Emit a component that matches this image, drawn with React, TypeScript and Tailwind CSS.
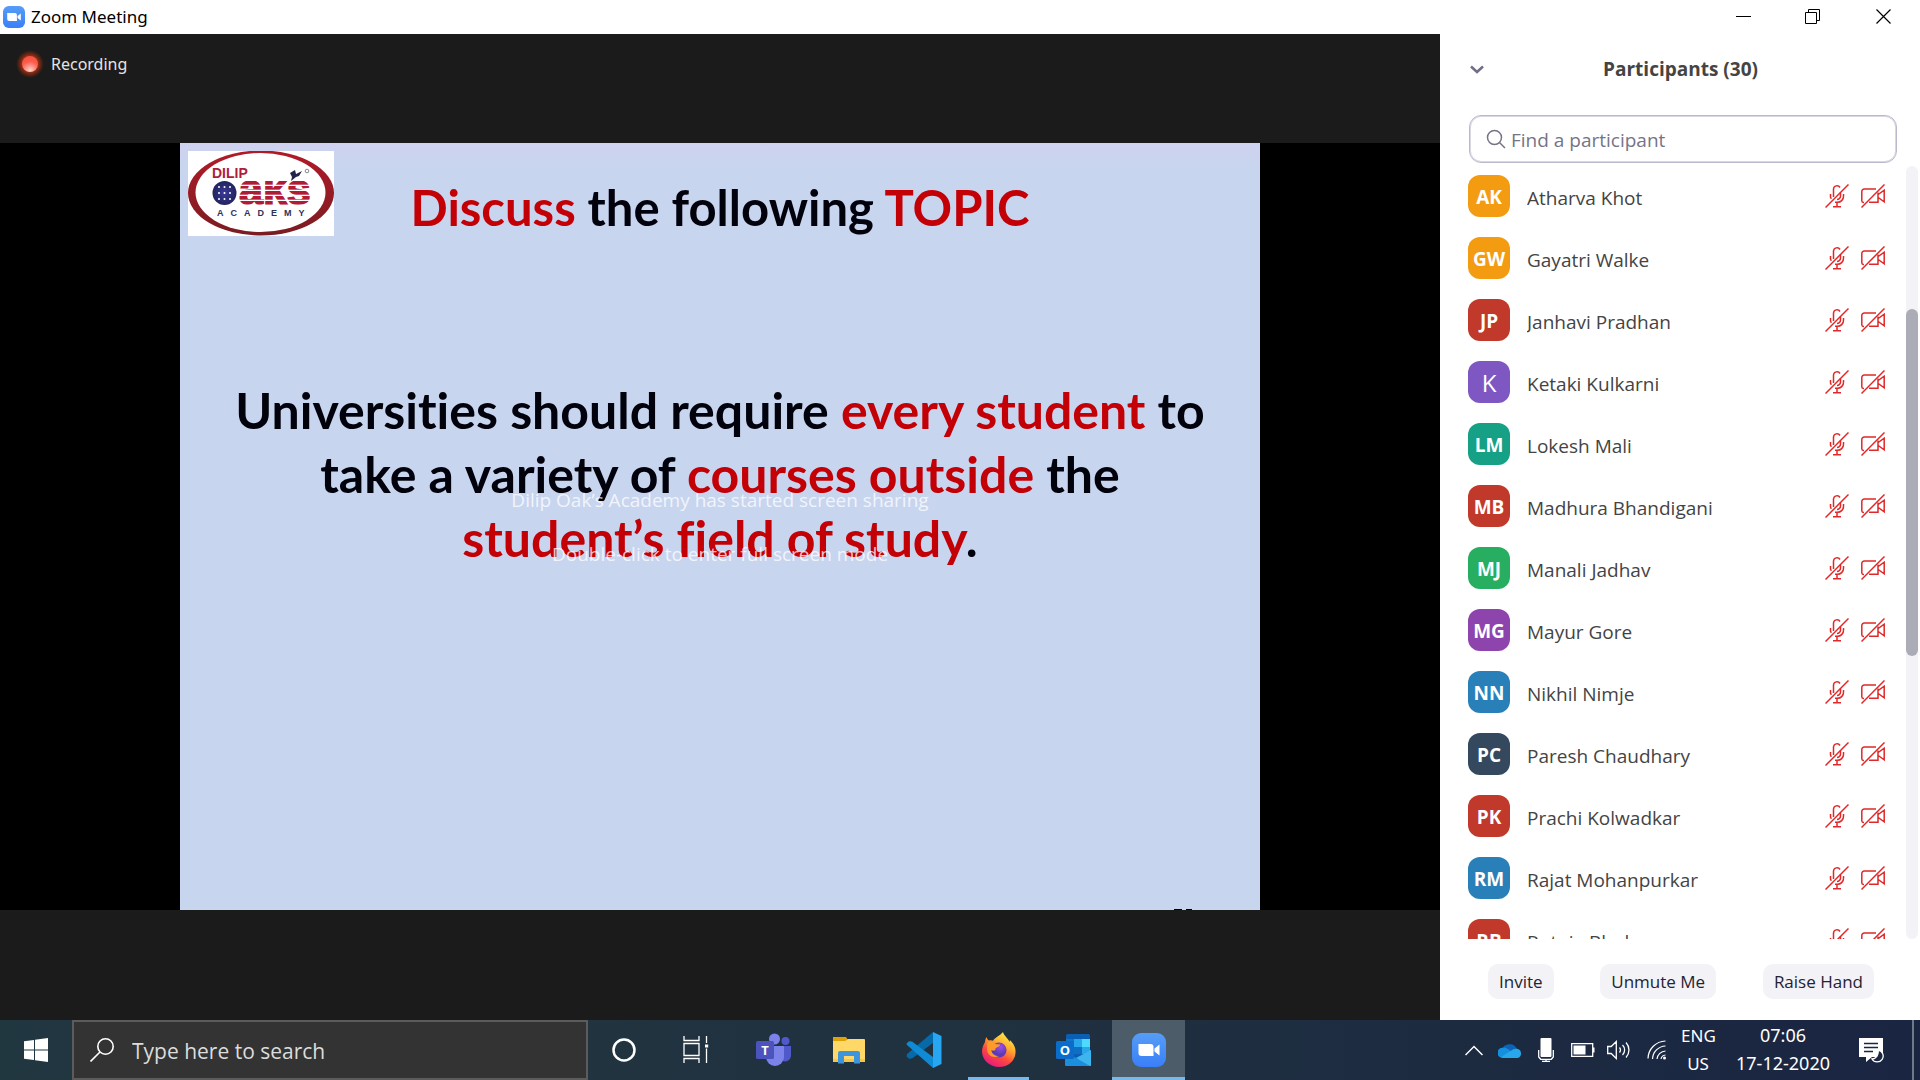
import React from "react";

type Person = { initials: string; name: string; tint: string; solo?: boolean };

const people: Person[] = [
  { initials: "AK", name: "Atharva Khot", tint: "bg-[#f39c12]" },
  { initials: "GW", name: "Gayatri Walke", tint: "bg-[#f39c12]" },
  { initials: "JP", name: "Janhavi Pradhan", tint: "bg-[#c0392b]" },
  { initials: "K", name: "Ketaki Kulkarni", tint: "bg-[#7e57c2]", solo: true },
  { initials: "LM", name: "Lokesh Mali", tint: "bg-[#16a085]" },
  { initials: "MB", name: "Madhura Bhandigani", tint: "bg-[#c0392b]" },
  { initials: "MJ", name: "Manali Jadhav", tint: "bg-[#27ae60]" },
  { initials: "MG", name: "Mayur Gore", tint: "bg-[#8e44ad]" },
  { initials: "NN", name: "Nikhil Nimje", tint: "bg-[#2980b9]" },
  { initials: "PC", name: "Paresh Chaudhary", tint: "bg-[#34495e]" },
  { initials: "PK", name: "Prachi Kolwadkar", tint: "bg-[#c0392b]" },
  { initials: "RM", name: "Rajat Mohanpurkar", tint: "bg-[#2980b9]" },
  { initials: "RB", name: "Rutuja Bhokare", tint: "bg-[#c0392b]" },
];

function ZoomLogo({ className }: { className: string }) {
  return (
    <svg viewBox="0 0 34 34" className={className} aria-hidden="true">
      <defs>
        <linearGradient id="zoomBlue" x1="0" y1="0" x2="0" y2="1">
          <stop offset="0" stopColor="#569df7" />
          <stop offset="1" stopColor="#3a7ff8" />
        </linearGradient>
      </defs>
      <rect width="34" height="34" rx="9" fill="url(#zoomBlue)" />
      <path d="M6.500 11h12a3 3 0 0 1 3 3v9h-12a3 3 0 0 1-3-3z" fill="#fff" />
      <path d="M22.500 15.500l5-4v11l-5-4z" fill="#fff" />
    </svg>
  );
}

function MicOff() {
  return (
    <svg viewBox="0 0 24 24" className="size-6" fill="none" stroke="#e02828" strokeWidth="1.500" aria-hidden="true">
      <path d="M8.500 13V5a3.500 3.500 0 0 1 6.500-1.500M15.500 8.500V12a3.500 3.500 0 0 1-3.500 3.500" />
      <path d="M5.500 10v3l.8 1.800M18.500 10v2a6 6 0 0 1-6.500 6.300h-2M12 18.500V22.500M8 22.800h8" />
      <path d="M.5 23.500L23.500.5" />
    </svg>
  );
}

function CameraOff() {
  return (
    <svg viewBox="0 0 24 24" className="size-6" fill="none" stroke="#e02828" strokeWidth="1.500" aria-hidden="true">
      <path d="M3 18.500H2.500a1.700 1.700 0 0 1-1.700-1.700V7.500A2.500 2.500 0 0 1 3.300 5H15M17 8.500V18.300H8M17.200 10.500l6-4.300v11.600l-6-4.300" />
      <path d="M.5 23.500L23.500.5" />
    </svg>
  );
}

function AcademyLogo() {
  return (
    <svg viewBox="0 0 146 85" className="block w-[146px]" role="img" aria-label="Dilip Oak's Academy">
      <defs>
        <pattern id="stripes" width="8" height="5" patternUnits="userSpaceOnUse">
          <rect width="8" height="5" fill="#b01c35" />
          <rect y="3.700" width="8" height="1.300" fill="#fff" />
        </pattern>
        <linearGradient id="ring" x1="0" y1="0" x2="0" y2="1">
          <stop offset="0" stopColor="#b21a28" />
          <stop offset="1" stopColor="#7a1c22" />
        </linearGradient>
        <radialGradient id="globe">
          <stop offset="0" stopColor="#3a3a9c" />
          <stop offset="1" stopColor="#23235c" />
        </radialGradient>
      </defs>
      <rect width="146" height="85" fill="#fff" />
      <ellipse cx="73" cy="42" rx="73" ry="42.500" fill="url(#ring)" />
      <ellipse cx="72.500" cy="41.500" rx="65" ry="39.500" fill="#fff" />
      <text x="24" y="27" fontFamily="Liberation Sans" fontWeight="700" fontSize="14" fill="#b01c3c">DILIP</text>
      <circle cx="36.500" cy="42" r="12" fill="url(#globe)" />
      <g fill="#fff">
        {[36, 42, 48].map((y) => [31, 36.5, 42].map((x) => <circle key={`${x}-${y}`} cx={x} cy={y} r="1" />))}
      </g>
      <text x="51" y="53" fontFamily="Liberation Sans" fontWeight="700" fontSize="43" fill="url(#stripes)" stroke="url(#stripes)" strokeWidth="1.500">aĸs</text>
      <path d="M102 22l5-3 1 4 6-3-3 5-3 1-5 4 1-4z" fill="#23234a" />
      <circle cx="119" cy="20" r="1.800" fill="none" stroke="#888" />
      <text x="29" y="65" fontFamily="Liberation Sans" fontWeight="700" fontSize="9" letterSpacing="7" fill="#30305a">ACADEMY</text>
    </svg>
  );
}

function TitleBar() {
  return (
    <header className="flex h-[34px] shrink-0 items-center bg-white">
      <ZoomLogo className="ml-[3px] size-[22px]" />
      <h1 className="ml-1.5 flex-1 text-[17px] text-black">Zoom Meeting</h1>
      <button aria-label="Minimize" className="flex h-full w-[69px] items-center justify-center">
        <svg viewBox="0 0 16 16" className="size-4" stroke="#000"><path d="M0 7.500h15" /></svg>
      </button>
      <button aria-label="Restore" className="flex h-full w-[70px] items-center justify-center">
        <svg viewBox="0 0 16 16" className="size-4" fill="none" stroke="#000"><path d="M.5 3.500h11v11H.5zM3.500 3.500v-3h11v11h-3" /></svg>
      </button>
      <button aria-label="Close" className="flex h-full w-[72px] items-center justify-center">
        <svg viewBox="0 0 16 16" className="size-4" stroke="#000" strokeWidth="1.200"><path d="M.5 .5l14 14M14.500 .5l-14 14" /></svg>
      </button>
    </header>
  );
}

function Stage() {
  return (
    <main className="relative flex min-w-0 flex-1 flex-col justify-center bg-[#1b1b1b] pb-px">
      <div className="absolute left-4 top-4 flex items-center gap-[7px] text-base text-[#e4e4e4]">
        <span className="flex size-7 items-center justify-center rounded-full bg-[radial-gradient(circle,#b0351a_35%,#5a2412_55%,transparent_70%)]">
          <span className="size-4 rounded-full bg-[radial-gradient(circle_at_50%_90%,#ffd5cc,#ff5a4a_55%,#f0503c)]" />
        </span>
        Recording
      </div>
      <div className="flex justify-center bg-black">
        <section className="relative aspect-[1080/767] w-3/4 overflow-hidden bg-[#c8d5ef] bg-linear-to-b from-[#cfd2ee] to-[#c8d5ef] to-3% font-['Lato'] font-bold text-[#02020c] [font-variant-ligatures:none]">
          <div className="absolute left-2 top-2"><AcademyLogo /></div>
          <h2 className="mt-8 text-center text-[49px] leading-[64px]">
            <span className="text-[#c40007]">Discuss</span> the following <span className="text-[#c40007]">TOPIC</span>
          </h2>
          <p className="mt-[139px] text-center text-[50px] leading-[64px]">
            Universities should require <span className="text-[#c40007]">every student</span> to<br />
            take a variety of <span className="text-[#c40007]">courses outside</span> the<br />
            <span className="text-[#c40007]">student’s field of study</span>.
          </p>
          <div className="absolute bottom-0 right-[68px] flex gap-1">
            <span className="h-px w-2 bg-black" />
            <span className="h-px w-1.5 bg-black" />
          </div>
        </section>
      </div>
      <div className="absolute inset-x-0 top-[452px] flex flex-col gap-[26px] text-center font-['Open_Sans'] text-[19px] leading-7 text-white/75">
        <p>Dilip Oak’s Academy has started screen sharing</p>
        <p>Double-click to enter full screen mode</p>
      </div>
    </main>
  );
}

function Participants() {
  return (
    <aside className="flex w-[480px] shrink-0 flex-col bg-white font-['Open_Sans']">
      <div className="flex h-[70px] items-center pl-[27px] pr-[60px]">
        <button aria-label="Collapse" className="flex size-5 items-center justify-center">
          <svg viewBox="0 0 14 9" className="w-3.5" fill="none" stroke="#6e6e85" strokeWidth="2.500"><path d="M1 1.500l6 5.500 6-5.500" /></svg>
        </button>
        <h2 className="ml-3.5 flex-1 text-center text-[19px] font-bold text-[#444]">Participants (30)</h2>
      </div>
      <label className="ml-[29px] mr-[23px] mt-[11px] flex h-12 shrink-0 items-center gap-[5px] rounded-xl border border-[#babacc] pl-4 ring-1 ring-inset ring-[#d8d8e2]">
        <svg viewBox="0 0 20 20" className="size-5" fill="none" stroke="#747487" strokeWidth="1.500"><circle cx="8.500" cy="8.500" r="7" /><path d="M13.500 13.500l5.500 5.500" /></svg>
        <input aria-label="Find a participant" placeholder="Find a participant" className="min-w-0 flex-1 bg-transparent pt-0.5 text-[19px] text-[#444] outline-none placeholder:text-[#747487]" />
      </label>
      <div className="flex min-h-0 flex-1 overflow-hidden pt-px">
        <ul className="min-w-0 flex-1 overflow-hidden pt-px">
          {people.map((p) => (
            <li key={p.name} className="flex h-[62px] items-center pl-7 pr-[21px]">
              <span className={`flex size-[42px] shrink-0 items-center justify-center rounded-xl pt-0.5 text-white ${p.tint} ${p.solo ? "text-2xl" : "text-[19px] font-bold"}`}>
                {p.initials}
              </span>
              <span className="ml-[17px] flex-1 truncate pt-1 text-[19px] text-[#444]">{p.name}</span>
              <span className="flex gap-3"><MicOff /><CameraOff /></span>
            </li>
          ))}
        </ul>
        <div className="mr-0.5 mt-0.5 w-3 rounded-full bg-[#f2f2f7] pt-[143px]">
          <div className="h-[55%] rounded-full bg-[#acacb6]" />
        </div>
      </div>
      <div className="flex shrink-0 items-start justify-between pb-[21px] pl-12 pr-[46px] pt-[25px] text-[17px] text-[#232333]">
        {["Invite", "Unmute Me", "Raise Hand"].map((label) => (
          <button key={label} className="h-[35px] rounded-[10px] bg-[#f2f2f7] px-[11px]">{label}</button>
        ))}
      </div>
    </aside>
  );
}

function TeamsIcon() {
  return (
    <svg viewBox="0 0 36 34" className="h-[34px] w-9">
      <circle cx="29.500" cy="8" r="4" fill="#5059c9" />
      <path d="M22 13h13v10a6 6 0 0 1-8 5z" fill="#5059c9" />
      <circle cx="18.500" cy="6" r="5.500" fill="#7b83eb" />
      <path d="M10 13h18v11a9 9 0 0 1-18 0z" fill="#7b83eb" />
      <rect y="8" width="18" height="18" rx="1.500" fill="#4b53bc" />
      <text x="9" y="21.500" textAnchor="middle" fontFamily="Open Sans" fontWeight="700" fontSize="13" fill="#fff">T</text>
    </svg>
  );
}

function FolderIcon() {
  return (
    <svg viewBox="0 0 34 28" className="h-7 w-[34px]">
      <path d="M1 1h13l2 3v4H1z" fill="#e0a00a" />
      <path d="M1 5h12l3-2h16a1 1 0 0 1 1 1v22H1z" fill="#ffd867" />
      <path d="M1 23h32v3H1z" fill="#f7c548" />
      <path d="M6 27.500V17a2 2 0 0 1 2-2h18a2 2 0 0 1 2 2v10.500h-6V20H12v7.500z" fill="#3d96dd" />
    </svg>
  );
}

function CodeIcon() {
  return (
    <svg viewBox="0 0 36 36" className="size-9">
      <path d="M.5 24.500L3 26.700l3-.2L27 11V0L1 22z" fill="#0669a8" />
      <path d="M.5 11.500L3 9.300l3 .2L27 25v11L1 13z" fill="#0f8ad4" />
      <path d="M27 0l8.500 4v28L27 36z" fill="#27a6f2" />
    </svg>
  );
}

function FirefoxIcon() {
  return (
    <svg viewBox="0 0 36 36" className="size-9">
      <defs>
        <linearGradient id="ffBody" x1=".8" y1="0" x2=".25" y2="1">
          <stop offset="0" stopColor="#fff44f" />
          <stop offset=".35" stopColor="#ffb02e" />
          <stop offset=".65" stopColor="#ff4a3c" />
          <stop offset="1" stopColor="#e31587" />
        </linearGradient>
        <radialGradient id="ffCore" cx=".6" cy=".3">
          <stop offset="0" stopColor="#a04be8" />
          <stop offset="1" stopColor="#5b3bb5" />
        </radialGradient>
      </defs>
      <path d="M22 0c1 4 5 6 6.500 10 .5-1 .3-2 .3-2C33 12 35 16 34.500 21 34 29 27 35 18 35S1 28 1 19.500C1 15 3 12 4 10c0-1 .5-3.500 1.500-5C6 7 7 8 8 8.500c2-.5 3 0 4 .3C14 5 19 4 22 0z" fill="url(#ffBody)" />
      <circle cx="18" cy="18" r="7.500" fill="url(#ffCore)" />
      <path d="M7 10c3-1 6 0 7 2l5 .5c0 2-3 2.500-4.500 4C15 19 12 19 10 18c1 4 4 6 8 6-6 3-12-1-12-7 0-3 0-5 1-7z" fill="#ff9a2a" />
    </svg>
  );
}

function OutlookIcon() {
  return (
    <svg viewBox="0 0 36 34" className="h-[34px] w-9">
      <rect x="10" y="1" width="24" height="24" rx="1.500" fill="#0a5fb4" />
      <path d="M10 6h8v8h-8z" fill="#1176c8" /><path d="M18 6h8v8h-8z" fill="#28a8ea" /><path d="M26 6h8v8h-8z" fill="#50d9ff" />
      <path d="M18 14h8v7h-8z" fill="#0f6fc5" /><path d="M26 14h8v7h-8z" fill="#28a8ea" />
      <path d="M9 19l13 7 13-9v15a1 1 0 0 1-1 1H10a1 1 0 0 1-1-1z" fill="#1b8edd" />
      <path d="M35 17v15a1 1 0 0 1-1 1L20 25z" fill="#3fb5f0" />
      <rect y="8" width="18" height="18" rx="1.500" fill="#0b6cc9" />
      <text x="9" y="22" textAnchor="middle" fontFamily="Open Sans" fontWeight="700" fontSize="13" fill="#fff">O</text>
    </svg>
  );
}

const apps = [
  { label: "Microsoft Teams", icon: <TeamsIcon />, state: "" },
  { label: "File Explorer", icon: <FolderIcon />, state: "" },
  { label: "Visual Studio Code", icon: <CodeIcon />, state: "" },
  { label: "Firefox", icon: <FirefoxIcon />, state: "open" },
  { label: "Outlook", icon: <OutlookIcon />, state: "" },
  { label: "Zoom", icon: <ZoomLogo className="size-[34px]" />, state: "active" },
];

function Taskbar() {
  return (
    <footer className="flex h-[60px] shrink-0 items-stretch bg-linear-to-r from-[#213740] via-[#20313f] to-[#1a2542] text-white">
      <button aria-label="Start" className="flex w-[72px] items-center justify-center">
        <svg viewBox="0 0 24 24" className="size-6" fill="#fff"><path d="M0 3.300L10 1.900v9.500H0zM11 1.700L24 0v11.400H11zM0 12.500h10V22L0 20.700zM11 12.500h13V24l-13-1.800z" /></svg>
      </button>
      <label className="flex w-[516px] items-center gap-[18px] border-2 border-[#5c5c5c] bg-[#333] pl-4">
        <svg viewBox="0 0 24 24" className="size-6" fill="none" stroke="#fff" strokeWidth="1.600"><circle cx="15.500" cy="8.500" r="7.700" /><path d="M10 14L.5 23.500" /></svg>
        <input aria-label="Search" placeholder="Type here to search" className="min-w-0 flex-1 bg-transparent pt-1 font-['Open_Sans'] text-[21px] outline-none placeholder:text-[#dcdcdc]" />
      </label>
      <button aria-label="Cortana" className="flex w-[72px] items-center justify-center">
        <svg viewBox="0 0 24 24" className="size-6" fill="none" stroke="#fff" strokeWidth="2.500"><circle cx="12" cy="12" r="10.500" /></svg>
      </button>
      <button aria-label="Task view" className="mr-1 flex w-[72px] items-center justify-center">
        <svg viewBox="0 0 26 28" className="h-7 w-[26px]" fill="none" stroke="#fff" strokeWidth="1.300"><path d="M1 0v4.500h15V0M1 7.500h15v12H1zM1 27v-4.500h15V27M23.500 0v7M23.500 12.500v14.500" /><path d="M22 8.500h3.200v3H22z" fill="#fff" stroke="none" /></svg>
      </button>
      {apps.map((a) => (
        <button key={a.label} aria-label={a.label} className="flex w-[75px] justify-center px-px">
          <span className={`relative flex h-full items-center justify-center ${a.state === "active" ? "w-full bg-[#4d5c69]" : "w-[61px]"}`}>
            {a.icon}
            {a.state && <span className="absolute inset-x-0 bottom-0 h-[3px] bg-[#76b9ed]" />}
          </span>
        </button>
      ))}
      <div className="ml-auto flex items-center">
        <button aria-label="Show hidden icons" className="mr-[15px]">
          <svg viewBox="0 0 18 11" className="w-[18px]" fill="none" stroke="#fff" strokeWidth="1.500"><path d="M.5 10L9 1.500l8.500 8.500" /></svg>
        </button>
        <svg viewBox="0 0 24 16" className="mr-4 w-6" aria-label="OneDrive">
          <path d="M4 8a8 8 0 0 1 15-1l-7 6z" fill="#0b64b8" />
          <path d="M4.500 5.800A5 5 0 0 0 4.500 16L16 11 9 6.500a6 6 0 0 0-4.500-.7z" fill="#1490df" />
          <path d="M3 15l12-7.500c2-1 3-.8 4-.7A4.700 4.700 0 0 1 19.500 16H5z" fill="#28a8ea" />
        </svg>
        <svg viewBox="0 0 16 24" className="mr-[17px] w-4" fill="none" stroke="#fff" strokeWidth="1.300" aria-label="Microphone">
          <rect x="2.500" y="0" width="11" height="19" rx="1" fill="#fff" stroke="none" />
          <path d="M.7 12v7l2 2.300h10.600l2-2.300v-7M8 21.500V24M4 23.300h8" />
        </svg>
        <svg viewBox="0 0 24 14" className="mr-3 w-6" aria-label="Battery"><path d="M.7 .7h21v12.600H.7z" fill="none" stroke="#fff" strokeWidth="1.300" /><path d="M2.500 2.500h12v9h-12zM22 4.500h1.500v5H22z" fill="#fff" /></svg>
        <svg viewBox="0 0 24 20" className="mr-4 w-6" fill="none" stroke="#fff" strokeWidth="1.300" aria-label="Volume"><path d="M.7 6.500h3.500L9.300 1.500v17l-5.100-5H.7zM12.500 7.500a4 4 0 0 1 0 5M15.500 5a7 7 0 0 1 0 10M19 2.500a11 11 0 0 1 0 15" /></svg>
        <svg viewBox="0 0 20 20" className="mr-3.5 w-5" fill="none" stroke="#fff" strokeWidth="1.200" aria-label="Network"><path d="M1 18.500A18 18 0 0 1 18.500 1M5.500 19A13.500 13.500 0 0 1 18.500 6M10 19a9 9 0 0 1 8.500-8M14 19a5 5 0 0 1 4.500-4" /><circle cx="17.500" cy="18" r="1.500" fill="#fff" stroke="none" /></svg>
        <p className="mr-[21px] w-[34px] whitespace-nowrap text-center text-[17px] leading-7">ENG<br />US</p>
        <p className="mr-7 whitespace-nowrap pb-0.5 text-center text-[18px] leading-7">07:06<br />17-12-2020</p>
        <button aria-label="Notifications" className="mr-7">
          <svg viewBox="0 0 26 26" className="w-[26px]">
            <path d="M1 1h24v19H14l-6 5v-5H1z" fill="#fff" />
            <path d="M6 6.500h14M6 10.500h14M6 14.500h9" stroke="#1b2742" strokeWidth="1.500" />
            <path d="M20 13a6 6 0 1 1-6 9c4 0 7-4 6-9z" fill="#1b2742" stroke="#fff" strokeWidth="1.300" />
          </svg>
        </button>
        <button aria-label="Show desktop" className="h-[60px] w-2 border-l-2 border-[#6f7a89]" />
      </div>
    </footer>
  );
}

export default function App() {
  return (
    <div className="flex h-screen flex-col overflow-hidden bg-white font-['Noto_Sans','Open_Sans',sans-serif]">
      <TitleBar />
      <div className="flex min-h-0 flex-1">
        <Stage />
        <Participants />
      </div>
      <Taskbar />
    </div>
  );
}
